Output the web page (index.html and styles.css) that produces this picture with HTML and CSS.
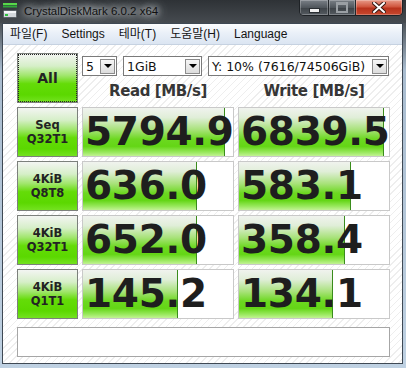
FILE: index.html
```html
<!doctype html>
<html>

<head>
    <meta charset="UTF-8">
    <meta name="viewport" content="width=device-width, initial-scale=1.0">
    <link rel="stylesheet" href="styles.css">
    <title>CrystalDiskMark</title>
</head>

<body>
    <div class="window">
        <div class="titlebar">
            <svg class="app-icon" width="14" height="15" viewBox="0 0 14 15">
                <rect x="0" y="0" width="14" height="2" fill="#58d84a" />
                <rect x="0" y="2.5" width="14" height="2" fill="#2fa63a" />
                <rect x="0.5" y="7.5" width="13" height="7" rx="1" fill="#d4d8dc" stroke="#5c6268" />
                <rect x="1" y="8" width="12" height="2" fill="#f4f6f8" />
                <rect x="2" y="11" width="3" height="2" fill="#30c040" />
            </svg>
            <span class="title">CrystalDiskMark 6.0.2 x64</span>
            <div class="caption-buttons">
                <div class="cap-btn cap-min"><span class="min-glyph"></span></div>
                <div class="cap-btn cap-max"><span class="max-glyph"></span></div>
                <div class="cap-btn cap-close">
                    <svg width="14" height="11" viewBox="0 0 14 11">
                        <path d="M2 1 L12 10 M12 1 L2 10" stroke="#3a1a14" stroke-width="4" stroke-linecap="square" />
                        <path d="M2 1 L12 10 M12 1 L2 10" stroke="#ffffff" stroke-width="2" stroke-linecap="square" />
                    </svg>
                </div>
            </div>
        </div>
        <div class="client">
            <div class="menubar">
                <span class="menu-item">파일(F)</span>
                <span class="menu-item">Settings</span>
                <span class="menu-item">테마(T)</span>
                <span class="menu-item">도움말(H)</span>
                <span class="menu-item">Language</span>
            </div>
            <div class="main">
                <div class="grid">
                    <div class="btn all">All</div>
                    <div class="top-right">
                        <div class="combos">
                            <div class="combo combo-count">5<span class="arrow"></span></div>
                            <div class="combo combo-size">1GiB<span class="arrow"></span></div>
                            <div class="combo combo-drive">Y: 10% (7616/74506GiB)<span class="arrow"></span></div>
                        </div>
                        <div class="headers">
                            <div>Read [MB/s]</div>
                            <div>Write [MB/s]</div>
                        </div>
                    </div>

                    <div class="btn">Seq<br>Q32T1</div>
                    <div class="result"><div class="fill" style="width: 141px"></div><span class="value">5794.9</span></div>
                    <div class="result"><div class="fill" style="width: 144px"></div><span class="value">6839.5</span></div>

                    <div class="btn">4KiB<br>Q8T8</div>
                    <div class="result"><div class="fill" style="width: 113px"></div><span class="value">636.0</span></div>
                    <div class="result"><div class="fill" style="width: 111px"></div><span class="value">583.1</span></div>

                    <div class="btn">4KiB<br>Q32T1</div>
                    <div class="result"><div class="fill" style="width: 113px"></div><span class="value">652.0</span></div>
                    <div class="result"><div class="fill" style="width: 105px"></div><span class="value">358.4</span></div>

                    <div class="btn">4KiB<br>Q1T1</div>
                    <div class="result"><div class="fill" style="width: 94px"></div><span class="value">145.2</span></div>
                    <div class="result"><div class="fill" style="width: 93px"></div><span class="value">134.1</span></div>
                </div>
                <div class="comment"></div>
            </div>
        </div>
    </div>
</body>

</html>
```

FILE: styles.css
```css
body {
    margin: 0;
    width: 406px;
    height: 368px;
    overflow: hidden;
    font-family: "Liberation Sans", "Noto Sans CJK KR", sans-serif;
}

.window {
    height: 368px;
    display: flex;
    flex-direction: column;
    background: linear-gradient(to bottom, #3b4045 0, #4c5258 23px, #a9bccf 70px, #bfd1e2 100%);
}

/* title bar */
.titlebar {
    height: 23px;
    display: flex;
    align-items: flex-start;
    background: linear-gradient(to bottom, #2e3236, #464b50);
}

.app-icon {
    margin: 3px 0 0 3px;
}

.title {
    margin: 4px 0 0 7px;
    font-size: 11.5px;
    line-height: 14px;
    color: #101010;
    text-shadow: 0 0 6px #e8ecef, 0 0 10px #c8cdd2, 0 0 14px #9ea4aa;
}

.caption-buttons {
    margin-left: auto;
    margin-right: 3px;
    display: flex;
    height: 15px;
    border: 1px solid #1e2226;
    border-top: 0;
    border-radius: 0 0 5px 5px;
    overflow: hidden;
}

.cap-btn {
    display: flex;
    align-items: center;
    justify-content: center;
    box-shadow: inset 0 0 0 1px rgba(255, 255, 255, 0.25);
}

.cap-min,
.cap-max {
    background: linear-gradient(to bottom, #7a8087, #50565c 50%, #3c4146 51%, #555b61);
    border-right: 1px solid #23272b;
}

.cap-min {
    width: 28px;
}

.cap-max {
    width: 26px;
}

.min-glyph {
    width: 9px;
    height: 3px;
    margin-top: 5px;
    background: #f0f0f0;
    border: 1px solid #2a2e32;
}

.max-glyph {
    width: 8px;
    height: 6px;
    border: 2px solid #9a9fa4;
    border-top-width: 3px;
}

.cap-close {
    width: 46px;
    background: linear-gradient(to bottom, #e89a88, #d0553e 45%, #b8321c 55%, #c8482e);
}

/* client area */
.client {
    flex: 1;
    margin: 0 3px 4px 2px;
    border: 1px solid #3f4954;
    display: flex;
    flex-direction: column;
    background: #ffffff;
}

.menubar {
    height: 20px;
    display: flex;
    align-items: center;
    background: linear-gradient(to bottom, #fcfdfe, #eaf0f8 45%, #dbe5f2);
    border-bottom: 1px solid #c6d2e1;
    font-size: 12px;
    color: #141414;
}

.menu-item {
    padding: 0 7px;
    line-height: 20px;
}

.main {
    flex: 1;
    padding: 8px 0 0 14px;
    background: repeating-linear-gradient(135deg, #ffffff 0 4px, #eeeeee 4px 5px);
}

.grid {
    display: grid;
    grid-template-columns: 61px 152px 152px;
    grid-auto-rows: 50px;
    gap: 4px;
}

.btn {
    box-sizing: border-box;
    border: 1px solid #7c807c;
    display: flex;
    align-items: center;
    justify-content: center;
    text-align: center;
    font-family: "DejaVu Sans", sans-serif;
    font-weight: bold;
    font-size: 11.5px;
    line-height: 14px;
    color: #232323;
    background: linear-gradient(to bottom, #f3f5f2 0%, #d6efc8 25%, #a0e66c 45%, #64dc08 62%, #5bd800 85%, #74e220 100%);
}

.all {
    font-size: 14px;
    outline: 1px dotted #222222;
    outline-offset: -2px;
}

.top-right {
    grid-column: span 2;
    display: flex;
    flex-direction: column;
}

.combos {
    display: flex;
    gap: 6px;
    margin-top: 3px;
    height: 20px;
}

.combo {
    box-sizing: border-box;
    border: 1px solid #7a7a7a;
    background: #ffffff;
    display: flex;
    align-items: center;
    justify-content: space-between;
    padding-left: 3px;
    font-family: "DejaVu Sans", sans-serif;
    font-size: 12.5px;
    color: #111111;
}

.combo-count {
    width: 35px;
}

.combo-size {
    width: 79px;
}

.combo-drive {
    width: 181px;
}

.arrow {
    box-sizing: border-box;
    width: 15px;
    height: 15px;
    margin-right: 1px;
    border: 1px solid #8c8c8c;
    background: linear-gradient(to bottom, #f6f6f6, #dcdcdc);
    display: flex;
    align-items: center;
    justify-content: center;
}

.arrow::after {
    content: "";
    border-left: 4px solid transparent;
    border-right: 4px solid transparent;
    border-top: 4px solid #000000;
}

.headers {
    flex: 1;
    display: grid;
    grid-template-columns: 152px 152px;
    gap: 4px;
    margin-top: 3px;
    align-items: center;
    text-align: center;
    font-family: "DejaVu Sans", sans-serif;
    font-weight: bold;
    font-size: 15px;
    letter-spacing: -0.4px;
    color: #363636;
}

.result {
    box-sizing: border-box;
    position: relative;
    overflow: hidden;
    border: 1px solid #c9c9c9;
    background: #ffffff;
}

.fill {
    position: absolute;
    left: 0;
    top: 0;
    bottom: 0;
    border-right: 1px solid #3a8c1c;
    background: linear-gradient(to bottom, #f0f3ee 0%, #e0eed8 20%, #a8e27a 45%, #6cd820 65%, #64d616 80%, #98e85c 92%, #c2f294 100%);
}

.value {
    position: relative;
    display: block;
    padding-left: 2px;
    font-family: "DejaVu Sans", sans-serif;
    font-weight: bold;
    font-size: 39px;
    letter-spacing: -0.3px;
    line-height: 48px;
    color: #1e1e1e;
}

.comment {
    margin-top: 8px;
    width: 373px;
    height: 30px;
    box-sizing: border-box;
    border: 1px solid #a6a6a6;
    background: #ffffff;
}
```
